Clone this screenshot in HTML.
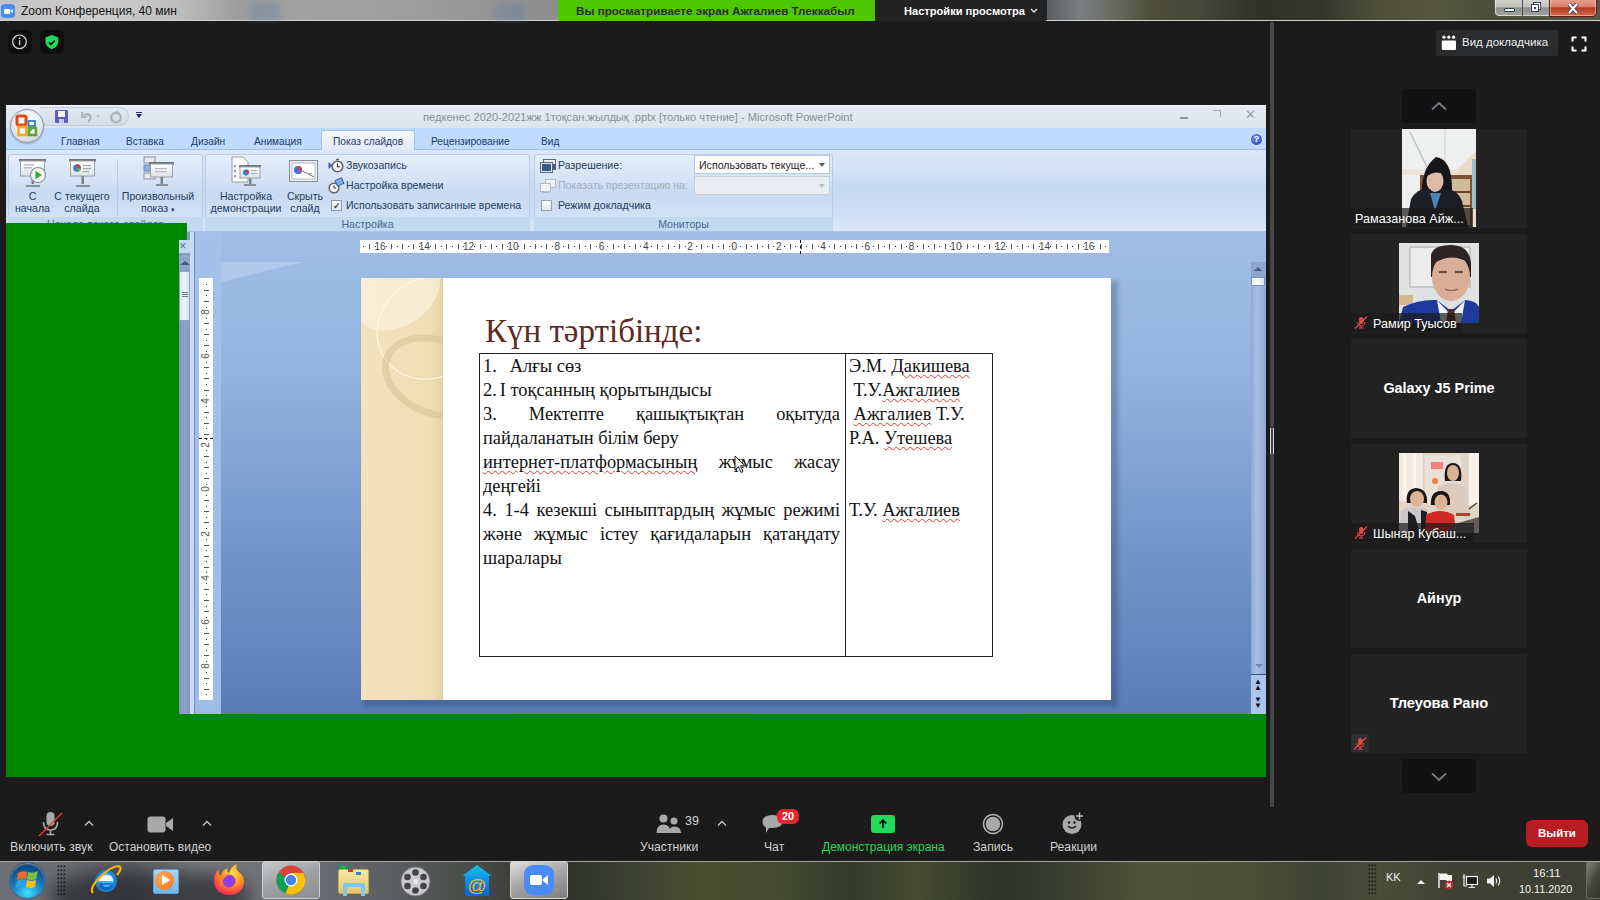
<!DOCTYPE html>
<html><head><meta charset="utf-8">
<style>
*{margin:0;padding:0;box-sizing:border-box}
html,body{width:1600px;height:900px;overflow:hidden;background:#1b1b1b;font-family:"Liberation Sans",sans-serif;position:relative}
.a{position:absolute}
i{font-style:normal}
#tb{left:0;top:0;width:1600px;height:21px;background:linear-gradient(90deg,#c4c4c4 0,#cdcdcd 100px,#bdbdbd 180px,#9c9c9c 240px,#a2a2a2 300px,#9d9d9d 420px,#8f8f8f 540px,#5a5e60 1047px,#7a7e80 1080px,#6a6d66 1110px,#4e5038 1150px,#45473a 1200px,#2f312a 1260px,#34362c 1320px,#4f5238 1380px,#55583e 1440px,#4a4c3a 1500px,#55574a 1600px);border-bottom:1px solid #cfcfcf}
#ppt{left:6px;top:105px;width:1260px;height:672px;background:#a9c3e6;overflow:hidden}
.green{background:#008700}
#sep{left:1270px;top:22px;width:4px;height:785px;background:#444}
.tile{left:1351px;width:176px;height:99px;background:#232323}
.ofb{left:4px;top:4px;width:34px;height:34px;border-radius:50%;background:radial-gradient(circle at 50% 40%,#ffffff 0,#eef1f5 45%,#c9d0d9 85%,#9aa3ad 100%);border:1px solid #8e96a0;box-shadow:0 1px 2px rgba(0,0,0,.25)}
.ttl{font-size:11.1px;color:#8a9097;white-space:nowrap;line-height:12px}
.tab{top:30px;font-size:10.2px;line-height:14px;color:#1d3c6e;white-space:nowrap}
.grp{top:49px;height:78px;border:1px solid #b7cde8;border-radius:3px;background:linear-gradient(#e3edfa 0,#d6e4f6 30%,#c8daf1 50%,#d3e2f5 85%)}
.glb{top:112px;height:15px;background:#c3d9f2;border-radius:0 0 3px 3px;text-align:center;color:#4a6892;font-size:10.6px;line-height:15px;white-space:nowrap}
.bl{text-align:center;font-size:10.6px;line-height:12px;color:#243d62;white-space:nowrap}
.rt1{font-size:10.6px;line-height:13px;color:#243d62;white-space:nowrap}
.scr{position:absolute;left:2px;top:0;width:24px;height:18px;background:linear-gradient(#fdfdfd,#dfe3e8);border:1px solid #8e969f;border-top:3px solid #6e767f}
.scr:after{content:"";position:absolute;left:10px;top:17px;width:3px;height:10px;background:#8a9098;box-shadow:-6px 9px 0 -1px #8a9098,6px 9px 0 -1px #8a9098}
.hr{width:749px;height:13px;background:#fff}
.hr i{position:absolute}
.rn{top:0;width:12px;text-align:center;font-size:10px;line-height:13px;color:#444}
.rt{top:4px;width:1px;height:5px;background:#555}
.rd{top:6px;width:1px;height:1px;background:#333}
.vr{width:14px;height:422px;background:#fff}
.vr i{position:absolute}
.vn{left:1px;width:12px;height:12px;text-align:center;font-size:10px;line-height:12px;color:#555;transform:rotate(-90deg)}
.vt{left:5px;width:5px;height:1px;background:#555}
.vd{left:7px;width:1px;height:1px;background:#333}
.stl{font:33px/40px "Liberation Serif",serif;color:#5c2a1f;white-space:nowrap}
.sb{font:18.4px/24px "Liberation Serif",serif;color:#111}
.sb div{white-space:nowrap;height:24px}
.sb div.j{text-align:justify;text-align-last:justify;white-space:normal}
.sq{text-decoration:underline wavy #e43a3a;text-decoration-thickness:1px;text-underline-offset:1.5px}
.nm{font-size:12.6px;line-height:14px;color:#fff;white-space:nowrap}
.bn{width:176px;text-align:center;font-weight:bold;line-height:16px;color:#fff;white-space:nowrap}
.tl{line-height:14px;color:#cfcfcf;white-space:nowrap}
</style></head><body>
<div id="tb" class="a"></div>
<div id="ppt" class="a">
 <div class="a" style="left:0;top:0;width:1260px;height:23px;background:linear-gradient(#e6ebf2,#dde4ed);border-top:1px solid #f4f6f9"></div>
 <div class="a" style="left:34px;top:2px;width:89px;height:19px;border-radius:0 10px 10px 0;background:linear-gradient(#e3e9f2,#d3dce8);border:1px solid #c3ccd9;border-left:none"></div>
 <div class="a" style="left:0;top:23px;width:1260px;height:22px;background:#bfdbfe"></div>
 <div class="a" style="left:0;top:44px;width:1260px;height:1px;background:#9ebfe9"></div>
 <div class="a ofb"></div>
 <svg class="a" style="left:9px;top:9px" width="24" height="24" viewBox="0 0 24 24"><rect x="2" y="2" width="9" height="9" rx="1.5" fill="none" stroke="#e24a17" stroke-width="3"/><rect x="13.5" y="7" width="6.5" height="5" fill="none" stroke="#2d7ed0" stroke-width="1.8"/><rect x="3.5" y="13" width="8" height="8" fill="none" stroke="#f0ad2a" stroke-width="2.6"/><rect x="14" y="14" width="7" height="7" fill="none" stroke="#5aa63a" stroke-width="2.6"/><circle cx="16" cy="16" r="1" fill="#5aa63a"/></svg>
 <div class="a" style="left:49px;top:5px;width:13px;height:13px;background:#5c5ec0;border-radius:1px"><div class="a" style="left:3px;top:1px;width:7px;height:6px;background:#f2f2fa"></div><div class="a" style="left:4px;top:9px;width:5px;height:4px;background:#c9cbe6"></div></div>
 <svg class="a" style="left:73px;top:5px" width="14" height="13"><path d="M3 2 V7 H8" stroke="#aeb6c2" stroke-width="2" fill="none"/><path d="M3.5 6.5 Q7 2.5 10.5 5 Q13 8 9 12" stroke="#aeb6c2" stroke-width="2.2" fill="none"/></svg><div class="a" style="left:90px;top:10px;width:0;height:0;border-left:2.5px solid transparent;border-right:2.5px solid transparent;border-top:3px solid #b8bfca"></div>
 <svg class="a" style="left:103px;top:5px" width="14" height="14"><circle cx="7" cy="7.5" r="4.8" stroke="#aeb6c2" stroke-width="2.4" fill="none"/><path d="M8 0.5 L11 3 L7.5 5 Z" fill="#aeb6c2"/></svg>
 <div class="a" style="left:130px;top:7px;width:6px;height:1px;background:#1b2a5a"></div>
 <div class="a" style="left:130px;top:9px;width:0;height:0;border-left:3px solid transparent;border-right:3px solid transparent;border-top:4px solid #1b2a5a"></div>
 <div class="a ttl" style="left:417px;top:6px">педкенес 2020-2021жж 1тоқсан.жылдық .pptx [только чтение] - Microsoft PowerPoint</div>
 <div class="a" style="left:1174px;top:12px;width:8px;height:2px;background:#8f949b"></div>
 <div class="a" style="left:1207px;top:5px;width:8px;height:7px;border:1px solid #a4a8ae;border-left:none;border-bottom:none"></div>
 <div class="a" style="left:1239px;top:2px;font:13px 'Liberation Sans';color:#9a9ea5">&#x2715;</div>
 <div class="a" style="left:315px;top:25px;width:94px;height:21px;border:1px solid #9fbfe6;border-bottom:none;border-radius:3px 3px 0 0;background:linear-gradient(#f5f8fc,#dfe9f6)"></div>
 <div class="a tab" style="left:55px">Главная</div>
 <div class="a tab" style="left:120px">Вставка</div>
 <div class="a tab" style="left:185px">Дизайн</div>
 <div class="a tab" style="left:248px">Анимация</div>
 <div class="a tab" style="left:327px">Показ слайдов</div>
 <div class="a tab" style="left:425px">Рецензирование</div>
 <div class="a tab" style="left:535px">Вид</div>
 <div class="a" style="left:1244px;top:28px;width:13px;height:13px;border-radius:50%;background:radial-gradient(circle at 40% 35%,#6f8ef0,#1f3fb0);border:1px solid #d6e0f4;color:#fff;font:bold 9px 'Liberation Sans';text-align:center;line-height:11px">?</div>
 <div class="a" style="left:0;top:45px;width:1260px;height:82px;background:linear-gradient(#dce8f7 0,#d3e1f4 25%,#c5d8f0 45%,#cfdff3 80%,#dde9f8 100%)"></div>
 <div class="a grp" style="left:2px;width:195px"></div>
 <div class="a grp" style="left:199px;width:325px"></div>
 <div class="a grp" style="left:528px;width:299px"></div>
 <div class="a glb" style="left:199px;width:325px">Настройка</div>
 <div class="a glb" style="left:528px;width:299px">Мониторы</div>
 <div class="a glb" style="left:2px;width:195px">Начало показа слайдов</div>
 <div class="a" style="left:0;top:126px;width:1260px;height:1px;background:#a7c3e6"></div>
<svg width="0" height="0" style="position:absolute"><defs><linearGradient id="scrg" x1="0" y1="0" x2="0" y2="1"><stop offset="0" stop-color="#ffffff"/><stop offset="1" stop-color="#dde2e8"/></linearGradient></defs></svg>
 <svg class="a" style="left:12px;top:53px" width="30" height="30" viewBox="0 0 30 30"><rect x="1" y="1" width="27" height="2.5" fill="#6f757c"/><rect x="2.5" y="3" width="24" height="15" fill="url(#scrg)" stroke="#9aa0a8" stroke-width="1"/><rect x="13.5" y="18" width="2.5" height="8" fill="#7d838a"/><path d="M8 28 H22" stroke="#8a9097" stroke-width="2"/><rect x="6" y="6" width="10" height="1.5" fill="#b8bec6"/><rect x="6" y="9" width="8" height="1.5" fill="#b8bec6"/><circle cx="20" cy="17" r="7.5" fill="#eef3ee" stroke="#8f9a9a" stroke-width="1.2"/><path d="M17.5 13 L24 17 L17.5 21 Z" fill="#36a53a"/></svg>
 <svg class="a" style="left:62px;top:53px" width="30" height="30" viewBox="0 0 30 30"><rect x="1" y="1" width="27" height="2.5" fill="#6f757c"/><rect x="2.5" y="3" width="24" height="15" fill="url(#scrg)" stroke="#9aa0a8" stroke-width="1"/><rect x="13.5" y="18" width="2.5" height="8" fill="#7d838a"/><path d="M8 28 H22" stroke="#8a9097" stroke-width="2"/><circle cx="9" cy="10" r="3.8" fill="#3b78cf"/><path d="M9 10 L9 6.2 A3.8 3.8 0 0 1 12.8 10 Z" fill="#e23a2a"/><path d="M9 10 L12.8 10 A3.8 3.8 0 0 1 10 13.7 Z" fill="#6ab04a"/><rect x="15" y="7" width="8" height="1.2" fill="#9aa"/><rect x="15" y="10" width="8" height="1.2" fill="#9aa"/><rect x="15" y="13" width="6" height="1.2" fill="#9aa"/></svg>
 <svg class="a" style="left:137px;top:51px" width="32" height="32" viewBox="0 0 32 32"><rect x="1" y="1" width="11" height="6" fill="#e4e8ee" stroke="#8c949c"/><rect x="1" y="9" width="11" height="6" fill="#8fb0de" stroke="#6d86a8"/><rect x="1" y="17" width="11" height="6" fill="#e4e8ee" stroke="#8c949c"/><rect x="6" y="6" width="25" height="2.5" fill="#6f757c"/><rect x="7.5" y="8" width="22" height="13" fill="url(#scrg)" stroke="#9aa0a8"/><rect x="12" y="12" width="12" height="1.2" fill="#b5bbc3"/><rect x="12" y="15" width="12" height="1.2" fill="#b5bbc3"/><rect x="17.5" y="21" width="2.5" height="7" fill="#7d838a"/><path d="M13 29 H25" stroke="#8a9097" stroke-width="2"/></svg>
 <svg class="a" style="left:224px;top:51px" width="32" height="32" viewBox="0 0 32 32"><path d="M2 1 H13 L18 6 V26 H2 Z" fill="#fafafa" stroke="#9aa0a6"/><circle cx="5" cy="10" r="1" fill="#6a7a8a"/><circle cx="5" cy="15" r="1" fill="#6a7a8a"/><circle cx="5" cy="20" r="1" fill="#6a7a8a"/><rect x="9" y="9" width="22" height="2.5" fill="#6f757c"/><rect x="10" y="11" width="20" height="11" fill="url(#scrg)" stroke="#9aa0a8"/><circle cx="16" cy="16.5" r="3" fill="#3b78cf"/><path d="M16 16.5 V13.5 A3 3 0 0 1 19 16.5 Z" fill="#e23a2a"/><rect x="21" y="14" width="6" height="1" fill="#9aa"/><rect x="21" y="17" width="6" height="1" fill="#9aa"/><rect x="19" y="22" width="2.5" height="6" fill="#7d838a"/><path d="M14 29 H26" stroke="#8a9097" stroke-width="2"/></svg>
 <svg class="a" style="left:283px;top:55px" width="30" height="24" viewBox="0 0 30 24"><rect x="0.5" y="0.5" width="28" height="21" fill="#eef1f4" stroke="#848c96"/><rect x="3" y="3" width="23" height="16" fill="#fff" stroke="#b0b7bf"/><circle cx="9" cy="10" r="4" fill="#3b78cf"/><path d="M9 10 V6 A4 4 0 0 1 13 10 Z" fill="#e23a2a"/><path d="M9 10 L13 10 A4 4 0 0 1 10 14 Z" fill="#a050c0"/><path d="M6 7 L25 17" stroke="#6a7078" stroke-width="1"/><rect x="17" y="13" width="6" height="1" fill="#aab"/></svg>
 <div class="a" style="left:111px;top:54px;width:1px;height:57px;background:#b8cbe4"></div>
 <div class="a bl" style="left:1px;top:85px;width:51px">С<br>начала</div>
 <div class="a bl" style="left:46px;top:85px;width:60px">С текущего<br>слайда</div>
 <div class="a bl" style="left:110px;top:85px;width:84px">Произвольный<br>показ <span style="font-size:7px">&#9662;</span></div>
 <div class="a bl" style="left:202px;top:85px;width:76px">Настройка<br>демонстрации</div>
 <div class="a bl" style="left:278px;top:85px;width:42px">Скрыть<br>слайд</div>
 <svg class="a" style="left:322px;top:53px" width="16" height="15" viewBox="0 0 16 15"><path d="M0.5 4 L4.5 7.5 L0.5 11 Z" fill="#4a52c8"/><circle cx="9.5" cy="8.5" r="5.3" fill="#f2f4f7" stroke="#5f6670" stroke-width="1.6"/><path d="M9.5 5.5 V8.8 H12" stroke="#333" stroke-width="1.1" fill="none"/><path d="M8 1.5 H11" stroke="#5f6670" stroke-width="1.5"/></svg>
 <svg class="a" style="left:322px;top:72px" width="17" height="17" viewBox="0 0 17 17"><circle cx="6" cy="11" r="4.8" fill="#f2f4f7" stroke="#5f6670" stroke-width="1.6"/><path d="M6 8.5 V11 H8" stroke="#333" stroke-width="1" fill="none"/><rect x="8" y="2" width="7" height="6" fill="#7ab4f0" stroke="#3b5f9e" stroke-width="1" transform="rotate(-25 11.5 5)"/></svg>
 <div class="a" style="left:325px;top:95px;width:11px;height:11px;border:1px solid #8f9aa8;background:linear-gradient(#f4f6f9,#dfe4ea);font:bold 9px 'Liberation Sans';color:#444;line-height:10px;text-align:center">&#10003;</div>
 <div class="a rt1" style="left:340px;top:54px">Звукозапись</div>
 <div class="a rt1" style="left:340px;top:74px">Настройка времени</div>
 <div class="a rt1" style="left:340px;top:94px">Использовать записанные времена</div>
 <svg class="a" style="left:533px;top:53px" width="18" height="16" viewBox="0 0 18 16"><rect x="4.5" y="1.5" width="12" height="10" fill="#e8ecf2" stroke="#5d6a7c"/><rect x="1.5" y="4.5" width="12" height="10" fill="#dfe6ef" stroke="#5d6a7c"/><rect x="3" y="6" width="9" height="7" fill="#3c5a86"/><rect x="14" y="6" width="2" height="5" fill="#3c5a86"/></svg>
 <svg class="a" style="left:533px;top:73px" width="18" height="16" viewBox="0 0 18 16"><rect x="6.5" y="1.5" width="10" height="8" fill="#eef1f5" stroke="#b3bcc8"/><rect x="1.5" y="5.5" width="10" height="8" fill="#eef1f5" stroke="#b3bcc8"/><rect x="3" y="13" width="7" height="2" fill="#b3bcc8"/></svg>
 <div class="a rt1" style="left:552px;top:54px">Разрешение:</div>
 <div class="a rt1" style="left:552px;top:74px;color:#a3aebf">Показать презентацию на:</div>
 <div class="a" style="left:535px;top:95px;width:11px;height:11px;border:1px solid #9aa4b2;background:linear-gradient(#f6f8fb,#e2e7ee)"></div>
 <div class="a rt1" style="left:552px;top:94px">Режим докладчика</div>
 <div class="a" style="left:688px;top:50px;width:136px;height:19px;background:#fff;border:1px solid #b8c8dc"><div class="a rt1" style="left:4px;top:3px;color:#222">Использовать текуще...</div><div class="a" style="left:124px;top:7px;width:0;height:0;border-left:3px solid transparent;border-right:3px solid transparent;border-top:4px solid #4a5a70"></div></div>
 <div class="a" style="left:688px;top:71px;width:136px;height:19px;background:#e9edf2;border:1px solid #c5d0dd"><div class="a" style="left:124px;top:7px;width:0;height:0;border-left:3px solid transparent;border-right:3px solid transparent;border-top:4px solid #b5bcc6"></div></div>
 <!-- work area -->
 <div class="a" style="left:0;top:127px;width:1260px;height:482px;background:linear-gradient(#a0bde6 0,#97b5e0 20%,#7b9ccf 55%,#5d80b7 100%)"></div>
 <div class="a" style="left:214px;top:157px;width:1030px;height:452px;background:linear-gradient(#9cbbe5 0,#93b2de 25%,#7597cb 60%,#5a7db5 100%)"></div>
 <div class="a" style="left:215px;top:157px;width:82px;height:20px;background:rgba(255,255,255,.22);clip-path:polygon(0 0,100% 0,0 100%)"></div>
 <div class="a" style="left:173px;top:127px;width:11px;height:482px;background:linear-gradient(90deg,#8197c0,#8ea4cc,#8399c2)"></div>
 <div class="a" style="left:173px;top:135px;width:11px;height:13px;background:#c4d6ee;color:#56709e;font:9px 'Liberation Sans';line-height:13px">&#x2715;</div>
 <div class="a" style="left:173px;top:151px;width:11px;height:14px;background:#8ea5cc"><div class="a" style="left:1px;top:5px;width:0;height:0;border-left:5px solid transparent;border-right:5px solid transparent;border-bottom:4px solid #3e5c8e"></div></div>
 <div class="a" style="left:173px;top:166px;width:11px;height:50px;background:linear-gradient(90deg,#d8e4f4,#f2f6fb,#d4e0f0);border:1px solid #8ea4c8"><div class="a" style="left:2px;top:20px;width:6px;height:1px;background:#6a7a94;box-shadow:0 2px #6a7a94,0 4px #6a7a94"></div></div>
 <div class="a" style="left:184px;top:127px;width:5px;height:482px;background:#c8dcf6"></div>
 <div class="a" style="left:188px;top:127px;width:1px;height:482px;background:#6f91c8"></div>
 <div class="a" style="left:189px;top:127px;width:26px;height:482px;background:linear-gradient(#a3c1ea,#9dbce6)"></div>
 <div class="a" style="left:1245px;top:157px;width:15px;height:452px;background:linear-gradient(90deg,#8fa9d2,#a8c0e3 40%,#8ea8d2)"></div>
 <div class="a" style="left:1245px;top:157px;width:15px;height:15px;background:#8ea6cd"><div class="a" style="left:3px;top:5px;width:0;height:0;border-left:4px solid transparent;border-right:4px solid transparent;border-bottom:4px solid #3f5f93"></div></div>
 <div class="a" style="left:1245px;top:172px;width:14px;height:9px;background:linear-gradient(90deg,#e2ebf7,#fafcff,#d8e3f2);border:1px solid #7c92b6"></div>
 <div class="a" style="left:1245px;top:553px;width:15px;height:16px"><div class="a" style="left:4px;top:6px;width:0;height:0;border-left:4px solid transparent;border-right:4px solid transparent;border-top:4px solid #7088b3"></div></div>
 <div class="a" style="left:1245px;top:569px;width:15px;height:40px;background:#a9c6f0;border-top:1px solid #3c4f7a"><div class="a" style="left:3px;top:4px;font:bold 8px/6px 'Liberation Sans';color:#111;">&#9650;<br>&#9650;<br><br>&#9660;<br>&#9660;</div></div>
 <div class="a hr" style="left:354px;top:135px"><i class="rd" style="left:3.4px"></i><i class="rt" style="left:8.9px"></i><i class="rd" style="left:14.5px"></i><i class="rn" style="left:14.0px">16</i><i class="rd" style="left:25.5px"></i><i class="rt" style="left:31.1px"></i><i class="rd" style="left:36.6px"></i><i class="rt" style="left:42.1px"></i><i class="rd" style="left:47.7px"></i><i class="rt" style="left:53.2px"></i><i class="rd" style="left:58.8px"></i><i class="rn" style="left:58.3px">14</i><i class="rd" style="left:69.8px"></i><i class="rt" style="left:75.4px"></i><i class="rd" style="left:80.9px"></i><i class="rt" style="left:86.4px"></i><i class="rd" style="left:92.0px"></i><i class="rt" style="left:97.5px"></i><i class="rd" style="left:103.1px"></i><i class="rn" style="left:102.6px">12</i><i class="rd" style="left:114.1px"></i><i class="rt" style="left:119.7px"></i><i class="rd" style="left:125.2px"></i><i class="rt" style="left:130.8px"></i><i class="rd" style="left:136.3px"></i><i class="rt" style="left:141.8px"></i><i class="rd" style="left:147.4px"></i><i class="rn" style="left:146.9px">10</i><i class="rd" style="left:158.4px"></i><i class="rt" style="left:164.0px"></i><i class="rd" style="left:169.5px"></i><i class="rt" style="left:175.0px"></i><i class="rd" style="left:180.6px"></i><i class="rt" style="left:186.1px"></i><i class="rd" style="left:191.7px"></i><i class="rn" style="left:191.2px">8</i><i class="rd" style="left:202.7px"></i><i class="rt" style="left:208.3px"></i><i class="rd" style="left:213.8px"></i><i class="rt" style="left:219.4px"></i><i class="rd" style="left:224.9px"></i><i class="rt" style="left:230.4px"></i><i class="rd" style="left:236.0px"></i><i class="rn" style="left:235.5px">6</i><i class="rd" style="left:247.0px"></i><i class="rt" style="left:252.6px"></i><i class="rd" style="left:258.1px"></i><i class="rt" style="left:263.6px"></i><i class="rd" style="left:269.2px"></i><i class="rt" style="left:274.7px"></i><i class="rd" style="left:280.3px"></i><i class="rn" style="left:279.8px">4</i><i class="rd" style="left:291.3px"></i><i class="rt" style="left:296.9px"></i><i class="rd" style="left:302.4px"></i><i class="rt" style="left:308.0px"></i><i class="rd" style="left:313.5px"></i><i class="rt" style="left:319.0px"></i><i class="rd" style="left:324.6px"></i><i class="rn" style="left:324.1px">2</i><i class="rd" style="left:335.6px"></i><i class="rt" style="left:341.2px"></i><i class="rd" style="left:346.7px"></i><i class="rt" style="left:352.2px"></i><i class="rd" style="left:357.8px"></i><i class="rt" style="left:363.3px"></i><i class="rd" style="left:368.9px"></i><i class="rn" style="left:368.4px">0</i><i class="rd" style="left:379.9px"></i><i class="rt" style="left:385.5px"></i><i class="rd" style="left:391.0px"></i><i class="rt" style="left:396.5px"></i><i class="rd" style="left:402.1px"></i><i class="rt" style="left:407.6px"></i><i class="rd" style="left:413.2px"></i><i class="rn" style="left:412.7px">2</i><i class="rd" style="left:424.2px"></i><i class="rt" style="left:429.8px"></i><i class="rd" style="left:435.3px"></i><i class="rt" style="left:440.8px"></i><i class="rd" style="left:446.4px"></i><i class="rt" style="left:451.9px"></i><i class="rd" style="left:457.5px"></i><i class="rn" style="left:457.0px">4</i><i class="rd" style="left:468.5px"></i><i class="rt" style="left:474.1px"></i><i class="rd" style="left:479.6px"></i><i class="rt" style="left:485.1px"></i><i class="rd" style="left:490.7px"></i><i class="rt" style="left:496.2px"></i><i class="rd" style="left:501.8px"></i><i class="rn" style="left:501.3px">6</i><i class="rd" style="left:512.8px"></i><i class="rt" style="left:518.4px"></i><i class="rd" style="left:523.9px"></i><i class="rt" style="left:529.4px"></i><i class="rd" style="left:535.0px"></i><i class="rt" style="left:540.5px"></i><i class="rd" style="left:546.1px"></i><i class="rn" style="left:545.6px">8</i><i class="rd" style="left:557.1px"></i><i class="rt" style="left:562.7px"></i><i class="rd" style="left:568.2px"></i><i class="rt" style="left:573.8px"></i><i class="rd" style="left:579.3px"></i><i class="rt" style="left:584.8px"></i><i class="rd" style="left:590.4px"></i><i class="rn" style="left:589.9px">10</i><i class="rd" style="left:601.4px"></i><i class="rt" style="left:607.0px"></i><i class="rd" style="left:612.5px"></i><i class="rt" style="left:618.0px"></i><i class="rd" style="left:623.6px"></i><i class="rt" style="left:629.1px"></i><i class="rd" style="left:634.7px"></i><i class="rn" style="left:634.2px">12</i><i class="rd" style="left:645.7px"></i><i class="rt" style="left:651.3px"></i><i class="rd" style="left:656.8px"></i><i class="rt" style="left:662.3px"></i><i class="rd" style="left:667.9px"></i><i class="rt" style="left:673.4px"></i><i class="rd" style="left:679.0px"></i><i class="rn" style="left:678.5px">14</i><i class="rd" style="left:690.0px"></i><i class="rt" style="left:695.6px"></i><i class="rd" style="left:701.1px"></i><i class="rt" style="left:706.7px"></i><i class="rd" style="left:712.2px"></i><i class="rt" style="left:717.7px"></i><i class="rd" style="left:723.3px"></i><i class="rn" style="left:722.8px">16</i><i class="rd" style="left:734.3px"></i><i class="rt" style="left:739.9px"></i><i class="rd" style="left:745.4px"></i></div>
 <div class="a" style="left:794px;top:135px;width:1px;height:14px;border-left:1px dashed #111"></div>
 <div class="a" style="left:193px;top:333px;width:14px;height:1px;border-top:1px dashed #111;z-index:2"></div>
 <div class="a vr" style="left:193px;top:173px"><i class="vd" style="top:6.3px"></i><i class="vt" style="top:11.9px"></i><i class="vd" style="top:17.4px"></i><i class="vt" style="top:22.9px"></i><i class="vd" style="top:28.5px"></i><i class="vn" style="top:28.0px">8</i><i class="vd" style="top:39.5px"></i><i class="vt" style="top:45.1px"></i><i class="vd" style="top:50.6px"></i><i class="vt" style="top:56.1px"></i><i class="vd" style="top:61.7px"></i><i class="vt" style="top:67.2px"></i><i class="vd" style="top:72.8px"></i><i class="vn" style="top:72.3px">6</i><i class="vd" style="top:83.8px"></i><i class="vt" style="top:89.4px"></i><i class="vd" style="top:94.9px"></i><i class="vt" style="top:100.4px"></i><i class="vd" style="top:106.0px"></i><i class="vt" style="top:111.5px"></i><i class="vd" style="top:117.1px"></i><i class="vn" style="top:116.6px">4</i><i class="vd" style="top:128.1px"></i><i class="vt" style="top:133.7px"></i><i class="vd" style="top:139.2px"></i><i class="vt" style="top:144.8px"></i><i class="vd" style="top:150.3px"></i><i class="vt" style="top:155.8px"></i><i class="vd" style="top:161.4px"></i><i class="vn" style="top:160.9px">2</i><i class="vd" style="top:172.4px"></i><i class="vt" style="top:178.0px"></i><i class="vd" style="top:183.5px"></i><i class="vt" style="top:189.1px"></i><i class="vd" style="top:194.6px"></i><i class="vt" style="top:200.1px"></i><i class="vd" style="top:205.7px"></i><i class="vn" style="top:205.2px">0</i><i class="vd" style="top:216.7px"></i><i class="vt" style="top:222.3px"></i><i class="vd" style="top:227.8px"></i><i class="vt" style="top:233.3px"></i><i class="vd" style="top:238.9px"></i><i class="vt" style="top:244.4px"></i><i class="vd" style="top:250.0px"></i><i class="vn" style="top:249.5px">2</i><i class="vd" style="top:261.0px"></i><i class="vt" style="top:266.6px"></i><i class="vd" style="top:272.1px"></i><i class="vt" style="top:277.6px"></i><i class="vd" style="top:283.2px"></i><i class="vt" style="top:288.7px"></i><i class="vd" style="top:294.3px"></i><i class="vn" style="top:293.8px">4</i><i class="vd" style="top:305.3px"></i><i class="vt" style="top:310.9px"></i><i class="vd" style="top:316.4px"></i><i class="vt" style="top:322.0px"></i><i class="vd" style="top:327.5px"></i><i class="vt" style="top:333.0px"></i><i class="vd" style="top:338.6px"></i><i class="vn" style="top:338.1px">6</i><i class="vd" style="top:349.6px"></i><i class="vt" style="top:355.2px"></i><i class="vd" style="top:360.7px"></i><i class="vt" style="top:366.2px"></i><i class="vd" style="top:371.8px"></i><i class="vt" style="top:377.3px"></i><i class="vd" style="top:382.9px"></i><i class="vn" style="top:382.4px">8</i><i class="vd" style="top:393.9px"></i><i class="vt" style="top:399.5px"></i><i class="vd" style="top:405.0px"></i><i class="vt" style="top:410.5px"></i><i class="vd" style="top:416.1px"></i></div>
 <div class="a" style="left:358px;top:176px;width:754px;height:426px;background:rgba(20,40,80,.25);filter:blur(2px)"></div>
 <div id="slide" class="a" style="left:355px;top:173px;width:750px;height:422px;background:#fff;overflow:hidden">
  <div class="a" style="left:0;top:0;width:82px;height:422px;background:linear-gradient(90deg,#f2e2bd,#efddb5 85%,#e8d4a8 100%);border-right:1px solid #dccb9e"></div>
  <div class="a" style="left:-12px;top:-22px;width:95px;height:70px;border-radius:50%;background:rgba(255,250,238,.5);transform:rotate(-35deg)"></div>
  <div class="a" style="left:14px;top:0px;width:110px;height:100px;border-radius:50%;border:1.5px solid rgba(255,252,240,.95);transform:rotate(-35deg)"></div>
  <div class="a" style="left:19px;top:59px;width:112px;height:80px;border-radius:50%;border:7px solid rgba(210,192,148,.5);transform:rotate(22deg)"></div>
  <div class="a" style="left:82px;top:0;width:668px;height:422px;background:#fff"></div>
  <div class="a stl" style="left:124px;top:33px">Күн тәртібінде:</div>
  <div class="a" style="left:118px;top:75px;width:514px;height:304px;border:1px solid #222"></div>
  <div class="a" style="left:484px;top:75px;width:1px;height:304px;background:#222"></div>
  <div class="a sb" style="left:122px;top:76px;width:357px">
   <div>1.<span style="display:inline-block;width:13px"></span>Алғы сөз</div>
   <div>2.<span style="display:inline-block;width:3px"></span>I тоқсанның қорытындысы</div>
   <div class="j">3. Мектепте қашықтықтан оқытуда</div>
   <div>пайдаланатын білім беру</div>
   <div class="j"><u class="sq">интернет-платформасының</u> жұмыс жасау</div>
   <div>деңгейі</div>
   <div class="j">4. 1-4 кезекші сыныптардың жұмыс режимі</div>
   <div class="j">және жұмыс істеу қағидаларын қатаңдату</div>
   <div>шаралары</div>
  </div>
  <div class="a sb" style="left:488px;top:76px;width:140px">
   <div>Э.М. <u class="sq">Дакишева</u></div>
   <div>&nbsp;Т.У.<u class="sq">Ажгалиев</u></div>
   <div>&nbsp;<u class="sq">Ажгалиев</u> Т.У.</div>
   <div>Р.А. <u class="sq">Утешева</u></div>
   <div>&nbsp;</div>
   <div>&nbsp;</div>
   <div>Т.У. <u class="sq">Ажгалиев</u></div>
  </div>
 </div>
 <svg class="a" style="left:728px;top:350px" width="12" height="19" viewBox="0 0 12 19"><path d="M1 1 L1 15 L4.5 11.5 L7 17.5 L9 16.5 L6.5 10.8 L11 10.8 Z" fill="rgba(255,255,255,.85)" stroke="#222" stroke-width="1"/></svg>
</div>
<!-- title bar -->
<div class="a" style="left:250px;top:3px;width:30px;height:18px;background:rgba(70,110,170,.25);filter:blur(3px)"></div>
<div class="a" style="left:495px;top:3px;width:30px;height:18px;background:rgba(70,110,170,.25);filter:blur(3px)"></div>
<div class="a" style="left:1px;top:4px;width:14px;height:14px;border-radius:4px;background:#4a8cf7"><div class="a" style="left:3px;top:5px;width:6px;height:5px;background:#fff;border-radius:1px"></div><div class="a" style="left:9px;top:5px;width:0;height:0;border-top:2.5px solid transparent;border-bottom:2.5px solid transparent;border-right:3px solid #fff"></div></div>
<div class="a" style="left:21px;top:4px;font-size:12px;line-height:14px;color:#111;white-space:nowrap">Zoom Конференция, 40 мин</div>
<div class="a" style="left:558px;top:0;width:317px;height:21px;background:#4ec700;border-radius:0 0 0 2px"></div>
<div class="a" style="left:576px;top:4px;font-weight:bold;font-size:11.7px;line-height:14px;color:#2e2e2e;white-space:nowrap">Вы просматриваете экран Ажгалиев Тлеккабыл</div>
<div class="a" style="left:875px;top:0;width:172px;height:21px;background:#232323;border-radius:0 0 2px 0"></div>
<div class="a" style="left:904px;top:4px;font-weight:bold;font-size:11.1px;line-height:14px;color:#fff;white-space:nowrap">Настройки просмотра</div>
<svg class="a" style="left:1030px;top:8px" width="8" height="6"><path d="M1 1 L4 4 L7 1" stroke="#ddd" stroke-width="1.5" fill="none"/></svg>
<div class="a" style="left:1494px;top:-2px;width:103px;height:19px;border:1px solid #55574d;border-radius:0 0 5px 5px;background:linear-gradient(#d2d3cd 0,#c3c4bd 45%,#8f928a 52%,#a4a69f 100%);box-shadow:inset 0 0 0 1px rgba(255,255,255,.55)"></div>
<div class="a" style="left:1549px;top:-2px;width:48px;height:19px;border:1px solid #5e1e12;border-radius:0 0 5px 0;background:linear-gradient(#eaa391 0,#dc7d68 45%,#b33a1f 52%,#d66a4e 100%);box-shadow:inset 0 0 0 1px rgba(255,255,255,.4)"></div>
<div class="a" style="left:1522px;top:0;width:1px;height:16px;background:#505249"></div>
<div class="a" style="left:1504px;top:8px;width:11px;height:4px;background:#fff;border:1px solid #384060;border-radius:1px"></div>
<div class="a" style="left:1531px;top:4px;width:8px;height:8px;border:1px solid #384060;background:#fff;box-shadow:2px -2px 0 -1px #fff,2px -2px 0 0 #384060"><div class="a" style="left:2px;top:2px;width:2px;height:2px;background:#384060"></div></div>
<svg class="a" style="left:1567px;top:3px" width="12" height="11"><path d="M2 1 L10 10 M10 1 L2 10" stroke="#384060" stroke-width="4"/><path d="M2 1 L10 10 M10 1 L2 10" stroke="#fff" stroke-width="2.2"/></svg>
<!-- info / shield -->
<div class="a" style="left:8px;top:30px;width:24px;height:24px;border-radius:6px;background:#0e0f0f"></div>
<svg class="a" style="left:8px;top:30px" width="23" height="23"><circle cx="11.5" cy="11.8" r="6.8" stroke="#ddd" stroke-width="1.2" fill="none"/><rect x="10.9" y="10.2" width="1.4" height="5" fill="#ccc"/><circle cx="11.6" cy="8.2" r="0.9" fill="#ddd"/></svg>
<div class="a" style="left:40px;top:30px;width:24px;height:24px;border-radius:6px;background:#0e0f0f"></div>
<svg class="a" style="left:40px;top:30px" width="23" height="23"><path d="M11.8 5 L18.3 7.5 L18.3 11.5 Q18.3 16.5 11.8 19.3 Q5.5 16.5 5.5 11.5 L5.5 7.5 Z" fill="#23d95a"/><path d="M9 12.5 L11 14.3 L14.8 10.5" stroke="#111" stroke-width="1.6" fill="none"/></svg>
<!-- green overlay -->
<div class="a green" style="left:6px;top:223px;width:181px;height:17px"></div>
<div class="a green" style="left:6px;top:240px;width:173px;height:537px"></div>
<div class="a green" style="left:6px;top:714px;width:1260px;height:63px"></div>
<div id="sep" class="a"></div>
<div class="a" style="left:1270px;top:428px;width:1px;height:26px;background:#d8d8d8"></div>
<div class="a" style="left:1273px;top:428px;width:1px;height:26px;background:#d8d8d8"></div>
<!-- right panel -->
<div class="a" style="left:1436px;top:30px;width:122px;height:26px;background:#2a2b2c;border-radius:2px"></div>
<svg class="a" style="left:1441px;top:34px" width="16" height="17"><circle cx="3" cy="3.2" r="1.6" fill="#fff"/><circle cx="7.8" cy="3.2" r="1.6" fill="#fff"/><circle cx="12.6" cy="3.2" r="1.6" fill="#fff"/><rect x="0.8" y="6.5" width="14.2" height="9.5" rx="1" fill="#fff"/></svg>
<div class="a" style="left:1462px;top:35px;font-size:11.5px;line-height:14px;color:#eee;white-space:nowrap">Вид докладчика</div>
<svg class="a" style="left:1571px;top:36px" width="16" height="16"><path d="M1.5 5.5 V1.5 H5.5 M10.5 1.5 H14.5 V5.5 M14.5 10.5 V14.5 H10.5 M5.5 14.5 H1.5 V10.5" stroke="#fff" stroke-width="2" fill="none"/></svg>
<div class="a" style="left:1402px;top:89px;width:74px;height:34px;background:#121212;border-radius:4px"></div>
<svg class="a" style="left:1430px;top:101px" width="18" height="10"><path d="M2 8.5 L9 2 L16 8.5" stroke="#7b788a" stroke-width="1.8" fill="none"/></svg>
<div class="a tile" style="top:129px"></div>
<div class="a tile" style="top:234px"></div>
<div class="a tile" style="top:339px"></div>
<div class="a tile" style="top:444px"></div>
<div class="a tile" style="top:549px"></div>
<div class="a tile" style="top:654px"></div>
<svg class="a" style="left:1402px;top:129px" width="74" height="98" viewBox="0 0 74 98">
 <rect width="74" height="98" fill="#eef0ef"/>
 <path d="M56 40 L74 22 V98 H56 Z" fill="#eadcc8"/>
 <path d="M8 3 L26 40" stroke="#b5b9b9" stroke-width="1.2"/>
 <path d="M43 0 V42" stroke="#d2d4d4" stroke-width="1"/>
 <rect x="0" y="40" width="56" height="6" fill="#ebe3d8"/>
 <rect x="18" y="46" width="52" height="52" fill="#7e5236"/>
 <rect x="48" y="50" width="20" height="46" fill="#d2bb98"/>
 <rect x="48" y="62" width="20" height="2" fill="#6e4228"/>
 <rect x="48" y="76" width="20" height="2" fill="#6e4228"/>
 <rect x="70" y="30" width="4" height="50" fill="#9cc0c8"/>
 <path d="M20 70 Q18 40 34 28 Q50 30 50 60 L50 76 L20 76 Z" fill="#15151a"/>
 <ellipse cx="33" cy="52" rx="8.5" ry="11" fill="#dcbca8"/>
 <path d="M24 44 Q33 36 44 42 L44 46 Q33 40 24 48 Z" fill="#15151a"/>
 <path d="M4 98 L9 70 Q16 58 28 60 L33 66 L40 60 Q54 58 60 72 L66 98 Z" fill="#1c1d25"/>
 <path d="M28 64 L33 82 L39 64 Z" fill="#4c82b4"/>
</svg>
<div class="a" style="left:1351px;top:208px;width:122px;height:19px;background:rgba(26,26,26,.7)"></div>
<div class="a nm" style="left:1355px;top:212px">Рамазанова Айж...</div>
<svg class="a" style="left:1399px;top:243px" width="80" height="80" viewBox="0 0 80 80">
 <rect width="80" height="80" fill="#e0e1e1"/>
 <rect x="11" y="4" width="60" height="40" fill="#ececec" stroke="#b9bcbd" stroke-width="1.5"/>
 <rect x="0" y="52" width="14" height="10" fill="#d6b890"/>
 <path d="M32 12 Q34 2 52 2 Q70 2 72 20 L72 34 L32 34 Z" fill="#2b2422"/>
 <ellipse cx="52" cy="34" rx="19" ry="24" fill="#d9ae97"/>
 <path d="M33 22 Q50 8 71 20 L71 14 Q52 0 33 14 Z" fill="#2b2422"/>
 <path d="M40 29 h8 M56 29 h8" stroke="#3a2a25" stroke-width="1.5"/>
 <path d="M46 46 Q52 49 59 46" stroke="#8a5a50" stroke-width="1.2" fill="none"/>
 <path d="M0 80 L4 64 Q20 56 38 57 L52 68 L66 57 Q78 58 80 64 V80 Z" fill="#1e3a9c"/>
 <path d="M38 57 L52 72 L66 57 L62 80 H42 Z" fill="#f4f4f4"/>
 <path d="M49 66 L55 66 L57 80 L47 80 Z" fill="#5a2a2a"/>
</svg>
<div class="a" style="left:1351px;top:313px;width:111px;height:19px;background:rgba(26,26,26,.7)"></div>
<svg class="a mic" style="left:1354px;top:316px" width="14" height="13" viewBox="0 0 14 13"><rect x="5" y="1" width="4.5" height="7" rx="2.2" fill="#e04848"/><path d="M3.5 6 Q3.5 10 7.2 10 Q11 10 11 6 M7.2 10 V12 M5 12 H9.5" stroke="#e04848" stroke-width="1" fill="none"/><path d="M1 12.5 L13 0.5" stroke="#e04848" stroke-width="1.3"/></svg>
<div class="a nm" style="left:1373px;top:317px">Рамир Туысов</div>
<div class="a bn" style="left:1351px;top:380px;font-size:14.4px">Galaxy J5 Prime</div>
<svg class="a" style="left:1399px;top:453px" width="80" height="80" viewBox="0 0 80 80">
 <rect width="80" height="80" fill="#e2d4c6"/>
 <rect x="0" y="0" width="24" height="48" fill="#f4ebe0"/>
 <rect x="4" y="0" width="3" height="48" fill="#fbf6ee"/>
 <rect x="14" y="0" width="3" height="48" fill="#fbf6ee"/>
 <rect x="70" y="0" width="10" height="52" fill="#f8f2ea"/>
 <rect x="26" y="2" width="36" height="48" fill="#ebe0d8"/>
 <rect x="32" y="9" width="12" height="7" fill="#f28080"/>
 <circle cx="36" cy="28" r="3" fill="#f08040"/>
 <path d="M46 28 Q44 10 54 10 Q64 10 62 28 Z" fill="#1e1818"/>
 <ellipse cx="54" cy="20" rx="6" ry="8" fill="#dcb294"/>
 <path d="M38 34 Q54 26 66 34 L72 64 L42 62 Z" fill="#dccbbc"/>
 <path d="M8 50 Q6 36 17 35 Q29 36 28 50 Z" fill="#1a1616"/>
 <ellipse cx="18" cy="46" rx="7" ry="8" fill="#dfb498"/>
 <path d="M0 80 L2 58 Q9 52 18 55 Q27 53 30 60 L30 80 Z" fill="#cbc8cc"/>
 <path d="M9 58 L16 63 L21 80 H9 Z M22 57 L28 59 L28 80 L22 80 Z" fill="#1e1e22"/>
 <path d="M32 52 Q31 38 42 38 Q52 38 51 52 Z" fill="#1a1414"/>
 <ellipse cx="42" cy="49" rx="6.5" ry="7.5" fill="#ddb092"/>
 <path d="M26 80 L27 62 Q41 54 55 62 L57 80 Z" fill="#d42826"/>
 <path d="M52 72 L80 64 V80 H50 Z" fill="#625c5a"/>
 <path d="M70 56 L78 50" stroke="#333" stroke-width="1.2"/>
 <rect x="57" y="60" width="14" height="3" fill="#d03030"/>
</svg>
<div class="a" style="left:1351px;top:523px;width:123px;height:19px;background:rgba(26,26,26,.7)"></div>
<svg class="a mic" style="left:1354px;top:526px" width="14" height="13" viewBox="0 0 14 13"><rect x="5" y="1" width="4.5" height="7" rx="2.2" fill="#e04848"/><path d="M3.5 6 Q3.5 10 7.2 10 Q11 10 11 6 M7.2 10 V12 M5 12 H9.5" stroke="#e04848" stroke-width="1" fill="none"/><path d="M1 12.5 L13 0.5" stroke="#e04848" stroke-width="1.3"/></svg>
<div class="a nm" style="left:1373px;top:527px">Шынар Кубаш...</div>
<div class="a bn" style="left:1351px;top:590px;font-size:14.4px">Айнур</div>
<div class="a bn" style="left:1351px;top:695px;font-size:14.7px">Тлеуова Рано</div>
<div class="a" style="left:1351px;top:734px;width:18px;height:18px;background:#2e2e2e"></div>
<svg class="a mic" style="left:1353px;top:737px" width="14" height="13" viewBox="0 0 14 13"><rect x="5" y="1" width="4.5" height="7" rx="2.2" fill="#e04848"/><path d="M3.5 6 Q3.5 10 7.2 10 Q11 10 11 6 M7.2 10 V12 M5 12 H9.5" stroke="#e04848" stroke-width="1" fill="none"/><path d="M1 12.5 L13 0.5" stroke="#e04848" stroke-width="1.3"/></svg>
<div class="a" style="left:1402px;top:759px;width:74px;height:34px;background:#121212;border-radius:4px"></div>
<svg class="a" style="left:1430px;top:772px" width="18" height="10"><path d="M2 1.5 L9 8 L16 1.5" stroke="#7b788a" stroke-width="1.8" fill="none"/></svg>
<!-- toolbar -->
<svg class="a" style="left:38px;top:811px" width="26" height="26" viewBox="0 0 26 26"><rect x="8.5" y="1" width="8" height="14" rx="4" fill="#a9a9a9"/><path d="M5.5 11 Q5.5 19 12.5 19 Q19.5 19 19.5 11 M12.5 19 V23 M8.5 23.5 H16.5" stroke="#a9a9a9" stroke-width="1.6" fill="none"/><path d="M1 25 L24 2" stroke="#e23a3a" stroke-width="1.5"/></svg>
<svg class="a car" style="left:84px;top:820px" width="10" height="7"><path d="M1 5.5 L5 1.5 L9 5.5" stroke="#c8c8c8" stroke-width="1.3" fill="none"/></svg>
<div class="a tl" style="left:10px;top:840px;font-size:12.4px">Включить звук</div>
<svg class="a" style="left:147px;top:816px" width="27" height="17" viewBox="0 0 27 17"><rect x="0.5" y="0.5" width="18" height="16" rx="3" fill="#a9a9a9"/><path d="M19 7 L26 2 V15 L19 10 Z" fill="#a9a9a9"/></svg>
<svg class="a car" style="left:202px;top:820px" width="10" height="7"><path d="M1 5.5 L5 1.5 L9 5.5" stroke="#c8c8c8" stroke-width="1.3" fill="none"/></svg>
<div class="a tl" style="left:109px;top:840px;font-size:12px">Остановить видео</div>
<svg class="a" style="left:656px;top:814px" width="26" height="20" viewBox="0 0 26 20"><circle cx="7.5" cy="4.5" r="4" fill="#a9a9a9"/><path d="M0.5 19 Q0.5 10.5 7.5 10.5 Q14.5 10.5 14.5 19 Z" fill="#a9a9a9"/><circle cx="18" cy="7" r="3.5" fill="#a9a9a9"/><path d="M13 19 Q13 12.5 18 12.5 Q25 12.5 25 19 Z" fill="#a9a9a9"/></svg>
<div class="a tl" style="left:685px;top:814px;font-size:12.5px;color:#cfcfcf">39</div>
<svg class="a car" style="left:717px;top:820px" width="10" height="7"><path d="M1 5.5 L5 1.5 L9 5.5" stroke="#c8c8c8" stroke-width="1.3" fill="none"/></svg>
<div class="a tl" style="left:640px;top:840px;font-size:12.2px">Участники</div>
<svg class="a" style="left:762px;top:814px" width="22" height="20" viewBox="0 0 22 20"><path d="M10.5 1 Q20.5 1 20.5 7.5 Q20.5 14 10.5 14 L7 14 L4 19 L4 13.5 Q0.5 12 0.5 7.5 Q0.5 1 10.5 1 Z" fill="#a9a9a9"/></svg>
<div class="a" style="left:777px;top:809px;width:22px;height:15px;border-radius:6px;background:#e5242b;color:#fff;font-weight:bold;font-size:11px;line-height:15px;text-align:center">20</div>
<div class="a tl" style="left:764px;top:840px;font-size:12.2px">Чат</div>
<div class="a" style="left:871px;top:815px;width:24px;height:18px;border-radius:3px;background:#23d95a"></div>
<svg class="a" style="left:877px;top:817px" width="12" height="14"><path d="M6 11 V3.5 M2.8 6.5 L6 3.2 L9.2 6.5" stroke="#111" stroke-width="1.8" fill="none"/></svg>
<div class="a tl" style="left:822px;top:840px;font-size:12px;color:#23d95a">Демонстрация экрана</div>
<svg class="a" style="left:982px;top:813px" width="22" height="22"><circle cx="11" cy="11" r="9.5" stroke="#b4b4b4" stroke-width="1.6" fill="none"/><circle cx="11" cy="11" r="7.3" fill="#a9a9a9"/></svg>
<div class="a tl" style="left:973px;top:840px;font-size:12.2px">Запись</div>
<svg class="a" style="left:1062px;top:811px" width="24" height="24"><circle cx="10" cy="13.5" r="9.5" fill="#a9a9a9"/><circle cx="7" cy="11.5" r="1.2" fill="#1a1a1a"/><circle cx="12.5" cy="11.5" r="1.2" fill="#1a1a1a"/><path d="M6 15 Q10 19 14 15" stroke="#1a1a1a" stroke-width="1.4" fill="none"/><circle cx="17.5" cy="5" r="5" fill="#1b1b1b"/><path d="M17.5 1.5 V8.5 M14 5 H21" stroke="#bdbdbd" stroke-width="1.5"/></svg>
<div class="a tl" style="left:1050px;top:840px;font-size:12.2px">Реакции</div>
<div class="a" style="left:1526px;top:820px;width:62px;height:27px;border-radius:6px;background:#b71d22"></div>
<div class="a" style="left:1526px;top:826px;width:62px;text-align:center;font-weight:bold;font-size:11.5px;line-height:14px;color:#fff">Выйти</div>
<!-- taskbar -->
<div id="task" class="a" style="left:0;top:861px;width:1600px;height:39px;overflow:hidden;background:linear-gradient(90deg,#6e7075 0,#6a6d72 60px,#5d6065 130px,#7a7c80 190px,#6b6e72 300px,#5e6066 380px,#4a4c46 470px,#2e312b 560px,#3a3e30 620px,#4a4f32 700px,#444a30 780px,#353a2a 850px,#454b30 920px,#2e3228 1000px,#3a3e2e 1060px,#50553a 1150px,#4b4f36 1250px,#3e4232 1320px,#4a4e38 1380px,#3f4233 1450px,#3c3e34 1600px)">
 <div class="a" style="left:50px;top:10px;width:200px;height:50px;background:rgba(25,25,30,.6);filter:blur(9px);border-radius:40%"></div>
 <div class="a" style="left:0;top:0;width:1600px;height:1px;background:#a4a5a2"></div>
</div>
<div class="a" style="left:9px;top:862px;width:37px;height:37px;border-radius:50%;background:radial-gradient(circle at 50% 85%,#3fe0ff 0,#1a8fd0 35%,#0f4f8c 70%,#1a3150 100%);border:1px solid #3b5f80;box-shadow:inset 0 1px 2px rgba(255,255,255,.5)"></div>
<svg class="a" style="left:15px;top:868px" width="26" height="24" viewBox="0 0 26 24"><path d="M3 5 Q7 2 12 4 L11 11 Q6 9 2 12 Z" fill="#f26a22"/><path d="M13 4 Q18 6 23 3 L21 11 Q16 13 12 11 Z" fill="#7cc142"/><path d="M2 13 Q6 10 11 12 L10 19 Q5 17 1 20 Z" fill="#2d9ee0"/><path d="M12 12 Q16 14 21 12 L20 19 Q15 21 11 19 Z" fill="#fbbc16"/></svg>
<svg class="a" style="left:57px;top:865px" width="10" height="31"><g fill="#1a1a1a"><rect x="0.5" y="0.5" width="1.6" height="1.6"/><rect x="3.5" y="0.5" width="1.6" height="1.6"/><rect x="6.5" y="0.5" width="1.6" height="1.6"/><rect x="0.5" y="4.5" width="1.6" height="1.6"/><rect x="3.5" y="4.5" width="1.6" height="1.6"/><rect x="6.5" y="4.5" width="1.6" height="1.6"/><rect x="0.5" y="8.5" width="1.6" height="1.6"/><rect x="3.5" y="8.5" width="1.6" height="1.6"/><rect x="6.5" y="8.5" width="1.6" height="1.6"/><rect x="0.5" y="12.5" width="1.6" height="1.6"/><rect x="3.5" y="12.5" width="1.6" height="1.6"/><rect x="6.5" y="12.5" width="1.6" height="1.6"/><rect x="0.5" y="16.5" width="1.6" height="1.6"/><rect x="3.5" y="16.5" width="1.6" height="1.6"/><rect x="6.5" y="16.5" width="1.6" height="1.6"/><rect x="0.5" y="20.5" width="1.6" height="1.6"/><rect x="3.5" y="20.5" width="1.6" height="1.6"/><rect x="6.5" y="20.5" width="1.6" height="1.6"/><rect x="0.5" y="24.5" width="1.6" height="1.6"/><rect x="3.5" y="24.5" width="1.6" height="1.6"/><rect x="6.5" y="24.5" width="1.6" height="1.6"/><rect x="0.5" y="28.5" width="1.6" height="1.6"/><rect x="3.5" y="28.5" width="1.6" height="1.6"/><rect x="6.5" y="28.5" width="1.6" height="1.6"/></g></svg>
<svg class="a" style="left:89px;top:864px" width="34" height="32" viewBox="0 0 34 32"><circle cx="17" cy="17" r="11" fill="#1c7ed6"/><circle cx="17" cy="17" r="8" fill="#4fb3f0"/><path d="M10 17 H24 Q24 11 17 11 Q10 11 10 17 Z" fill="#fff"/><path d="M9.5 19 H24.5 V21 H9.5 Z" fill="#1c7ed6"/><path d="M13 18.5 Q13 23 17.5 23 Q21 23 22 21 H24 Q22 26 17 26 Q10 26 10 19 Z" fill="#1565c0"/><path d="M4 29 Q0 25 10 14 Q22 2 30 2 Q34 4 28 11" stroke="#f5b400" stroke-width="2.2" fill="none"/></svg>
<div class="a" style="left:153px;top:869px;width:26px;height:25px;background:linear-gradient(#a9d6f5,#6fb7e8);border:1px solid #5aa0d6;border-radius:2px"></div>
<div class="a" style="left:155px;top:871px;width:19px;height:19px;border-radius:50%;background:radial-gradient(circle at 40% 35%,#ffae5a,#f36d14)"></div>
<div class="a" style="left:162px;top:875px;width:0;height:0;border-top:5.5px solid transparent;border-bottom:5.5px solid transparent;border-left:8px solid #fff"></div>
<svg class="a" style="left:212px;top:863px" width="34" height="34" viewBox="0 0 34 34"><defs><radialGradient id="ffo" cx="0.6" cy="0.3" r="0.8"><stop offset="0" stop-color="#ffe14a"/><stop offset="0.45" stop-color="#ff9a1e"/><stop offset="0.8" stop-color="#ff3d4a"/><stop offset="1" stop-color="#e8207a"/></radialGradient><radialGradient id="ffp" cx="0.5" cy="0.5" r="0.5"><stop offset="0" stop-color="#7a3cf0"/><stop offset="1" stop-color="#a040d8"/></radialGradient></defs><path d="M17 32 Q3 31 2 18 Q2 10 7 6 Q6 11 9 13 Q10 7 16 5 Q14 9 17 10 Q20 2 25 1 Q23 6 27 9 Q33 14 32 20 Q30 32 17 32 Z" fill="url(#ffo)"/><circle cx="17" cy="18" r="6.5" fill="url(#ffp)"/><path d="M8 14 Q12 11 16 13 Q12 14 11 17 Z" fill="#ff8a1e"/></svg>
<div class="a" style="left:262px;top:861px;width:58px;height:38px;border:1px solid #cfd0d0;border-radius:3px;background:linear-gradient(160deg,#c8c9ca 0,#9fa0a2 50%,#8d8e90 100%)"></div>
<svg class="a" style="left:276px;top:865px" width="30" height="30" viewBox="0 0 30 30"><circle cx="15" cy="15" r="14.5" fill="#db4437"/><path d="M15 15 L2.4 7.8 A14.5 14.5 0 0 0 9.5 28.4 Z" fill="#0f9d58"/><path d="M15 15 L9.5 28.4 A14.5 14.5 0 0 0 29.5 15 L27.6 7.8 Z" fill="#f4c20d"/><path d="M15 15 L27.6 7.8 L15 8 Z" fill="#f4c20d"/><circle cx="15" cy="15" r="6.5" fill="#fff"/><circle cx="15" cy="15" r="5.2" fill="#4285f4"/></svg>
<div class="a" style="left:338px;top:869px;width:31px;height:25px;background:linear-gradient(#f7e7a8,#e6c76a);border:1px solid #c9a850;border-radius:2px"></div>
<div class="a" style="left:341px;top:866px;width:5px;height:3px;background:#1bb13a"></div>
<div class="a" style="left:348px;top:869px;width:5px;height:3px;background:#d23a2a"></div>
<div class="a" style="left:356px;top:872px;width:5px;height:3px;background:#2a86d2"></div>
<div class="a" style="left:343px;top:883px;width:22px;height:13px;border:4px solid #7cc8f0;border-bottom:none;border-radius:2px 2px 0 0"></div>
<svg class="a" style="left:400px;top:866px" width="31" height="31" viewBox="0 0 31 31"><circle cx="15.5" cy="15.5" r="14.5" fill="#c9cacd" stroke="#7a7d88" stroke-width="1"/><g fill="#444"><circle cx="15.5" cy="6.5" r="3.3"/><circle cx="15.5" cy="24.5" r="3.3"/><circle cx="7.5" cy="11" r="3.3"/><circle cx="23.5" cy="11" r="3.3"/><circle cx="7.5" cy="20" r="3.3"/><circle cx="23.5" cy="20" r="3.3"/></g><circle cx="15.5" cy="15.5" r="2.5" fill="#e8e8e8"/></svg>
<svg class="a" style="left:460px;top:864px" width="34" height="33" viewBox="0 0 34 33"><defs><linearGradient id="ml" x1="0" y1="0" x2="0" y2="1"><stop offset="0" stop-color="#16c0f5"/><stop offset="1" stop-color="#0a5fd8"/></linearGradient></defs><path d="M17 1 L32 12 L29 12 L29 32 L5 32 L5 12 L2 12 Z" fill="url(#ml)"/><text x="17" y="28" text-anchor="middle" font-family="Liberation Sans" font-size="19" fill="#f7b21a">@</text></svg>
<div class="a" style="left:510px;top:861px;width:58px;height:38px;border:1px solid #d6d6d6;border-radius:3px;background:linear-gradient(160deg,#e0e0e0 0,#a8a8a8 45%,#7e7e7e 100%)"></div>
<div class="a" style="left:524px;top:865px;width:30px;height:30px;border-radius:9px;background:#4a8cf7"></div>
<div class="a" style="left:530px;top:875px;width:12px;height:10px;background:#fff;border-radius:2px"></div>
<div class="a" style="left:542px;top:875px;width:0;height:0;border-top:5px solid transparent;border-bottom:5px solid transparent;border-right:6px solid #fff"></div>
<svg class="a" style="left:1368px;top:864px" width="10" height="32"><g fill="#1a1a1a"><rect x="0.5" y="0.5" width="1.6" height="1.6"/><rect x="3.5" y="0.5" width="1.6" height="1.6"/><rect x="6.5" y="0.5" width="1.6" height="1.6"/><rect x="0.5" y="4.5" width="1.6" height="1.6"/><rect x="3.5" y="4.5" width="1.6" height="1.6"/><rect x="6.5" y="4.5" width="1.6" height="1.6"/><rect x="0.5" y="8.5" width="1.6" height="1.6"/><rect x="3.5" y="8.5" width="1.6" height="1.6"/><rect x="6.5" y="8.5" width="1.6" height="1.6"/><rect x="0.5" y="12.5" width="1.6" height="1.6"/><rect x="3.5" y="12.5" width="1.6" height="1.6"/><rect x="6.5" y="12.5" width="1.6" height="1.6"/><rect x="0.5" y="16.5" width="1.6" height="1.6"/><rect x="3.5" y="16.5" width="1.6" height="1.6"/><rect x="6.5" y="16.5" width="1.6" height="1.6"/><rect x="0.5" y="20.5" width="1.6" height="1.6"/><rect x="3.5" y="20.5" width="1.6" height="1.6"/><rect x="6.5" y="20.5" width="1.6" height="1.6"/><rect x="0.5" y="24.5" width="1.6" height="1.6"/><rect x="3.5" y="24.5" width="1.6" height="1.6"/><rect x="6.5" y="24.5" width="1.6" height="1.6"/><rect x="0.5" y="28.5" width="1.6" height="1.6"/><rect x="3.5" y="28.5" width="1.6" height="1.6"/><rect x="6.5" y="28.5" width="1.6" height="1.6"/></g></svg>
<div class="a" style="left:1386px;top:870px;font-size:11px;line-height:14px;color:#f0f0f0">KK</div>
<div class="a" style="left:1417px;top:880px;width:0;height:0;border-left:4px solid transparent;border-right:4px solid transparent;border-bottom:4px solid #f0f0f0"></div>
<svg class="a" style="left:1437px;top:872px" width="18" height="18"><path d="M2 1 V16" stroke="#eee" stroke-width="1.5"/><path d="M2.5 1.5 H10 L11 3 H15 V9 H10 L9 8 H2.5 Z" fill="#f2f2f2"/><circle cx="12" cy="13" r="4.2" fill="#d42020"/><path d="M10 11 L14 15 M14 11 L10 15" stroke="#fff" stroke-width="1.3"/></svg>
<svg class="a" style="left:1462px;top:873px" width="16" height="16"><rect x="4.5" y="3.5" width="11" height="8" fill="#1d1d1d" stroke="#eee" stroke-width="1.2"/><path d="M2 1 V6 M0.5 4 H3.5 M2 6 V13 H5 M10 11.5 V14 M6.5 14.5 H13" stroke="#eee" stroke-width="1.2" fill="none"/></svg>
<svg class="a" style="left:1486px;top:874px" width="16" height="14"><path d="M1 4.5 H4 L8 1 V13 L4 9.5 H1 Z" fill="#eee"/><path d="M10 4.5 Q11.5 7 10 9.5 M12.3 2.5 Q15 7 12.3 11.5" stroke="#eee" stroke-width="1.2" fill="none"/></svg>
<div class="a" style="left:1533px;top:866px;font-size:11.4px;line-height:14px;color:#f5f5f5">16:11</div>
<div class="a" style="left:1519px;top:882px;font-size:10.8px;line-height:14px;color:#f5f5f5">10.11.2020</div>
<div class="a" style="left:1586px;top:862px;width:14px;height:37px;border:1px solid #6a6a60;border-right:none;border-radius:2px 0 0 2px;background:linear-gradient(120deg,rgba(255,255,255,.35),rgba(255,255,255,.05) 50%,rgba(0,0,0,.2))"></div>
</body></html>
